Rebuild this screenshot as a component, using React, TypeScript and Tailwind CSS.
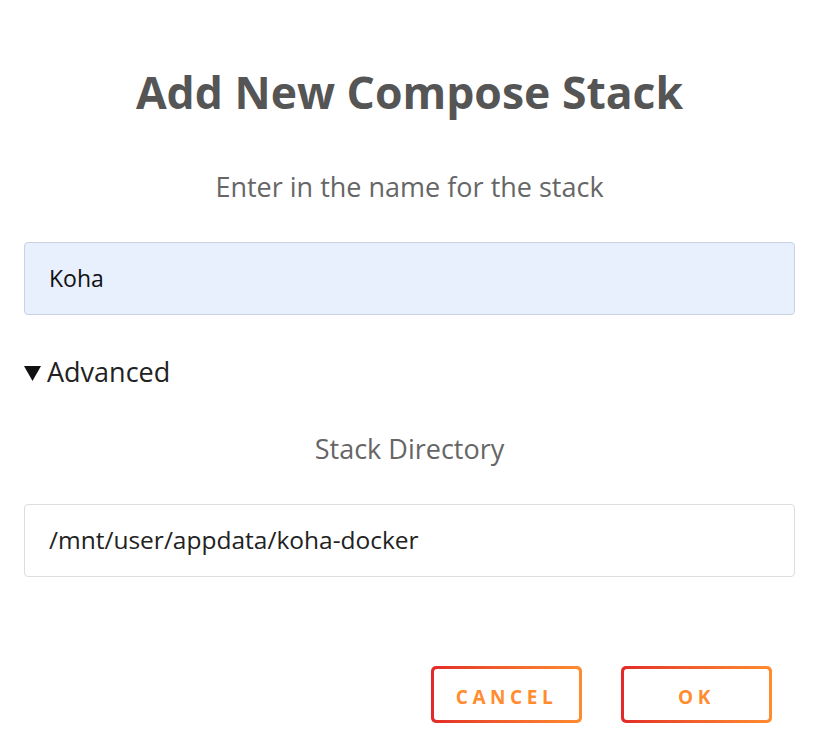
import React from "react";

const font = { fontFamily: '"Open Sans", "Noto Sans", sans-serif' };

function GradientButton({ label }: { label: string }) {
  return (
    <div className="rounded-[5px] bg-gradient-to-r from-[#e22828] to-[#ff8c2f] p-[3px]">
      <div className="flex h-[51px] w-[145px] items-center justify-center rounded-[3px] bg-white pt-[5px]">
        <span className="text-[19px] font-bold tracking-[0.24em] text-[#ff8c2f]">{label}</span>
      </div>
    </div>
  );
}

export default function App() {
  return (
    <div className="flex h-[750px] w-[819px] flex-col bg-white px-6" style={font}>
      <h1 className="mt-[64px] text-center text-[44.5px] font-bold leading-[56px] text-[#555555]">
        Add New Compose Stack
      </h1>
      <p className="mt-[49px] text-center text-[27px] leading-[36px] text-[#666666]">
        Enter in the name for the stack
      </p>
      <div className="mt-[37px] flex h-[73px] items-center rounded-[4px] border border-[#c9d2e0] bg-[#e8f0fe] px-6">
        <span className="text-[23px] text-[#111111]">Koha</span>
      </div>
      <div className="mt-[39px] flex items-center gap-[6px] text-[27px] leading-[36px] text-[#222222]">
        <svg width="17" height="15" viewBox="0 0 17 15" className="mt-[2px]">
          <polygon points="0,0 17,0 8.5,15" fill="#111111" />
        </svg>
        <span>Advanced</span>
      </div>
      <p className="mt-[41px] text-center text-[27px] leading-[36px] text-[#666666]">
        Stack Directory
      </p>
      <div className="mt-[37px] flex h-[73px] items-center rounded-[4px] border border-[#dddddd] bg-white px-6">
        <span className="text-[24.5px] text-[#222222]">/mnt/user/appdata/koha-docker</span>
      </div>
      <div className="mt-[89px] flex justify-end gap-[39px] pr-[23px]">
        <GradientButton label="CANCEL" />
        <GradientButton label="OK" />
      </div>
    </div>
  );
}
